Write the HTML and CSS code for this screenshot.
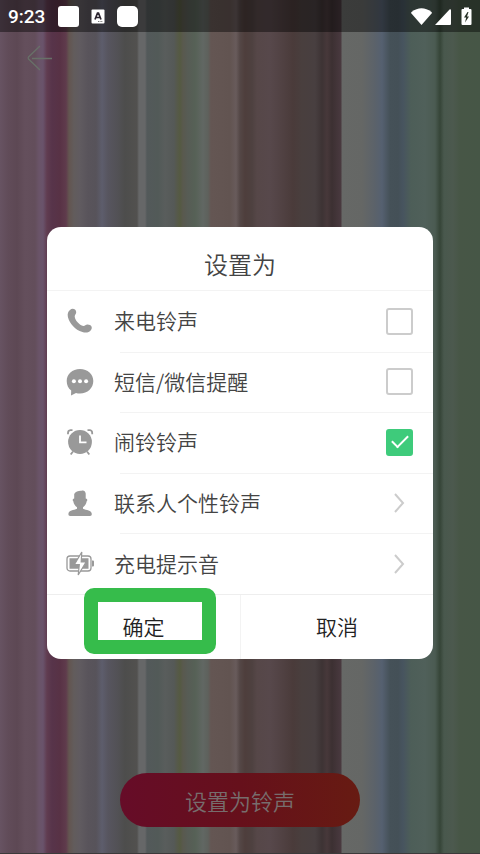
FILE: index.html
```html
<!DOCTYPE html>
<html lang="zh-CN">
<head>
<meta charset="utf-8">
<meta name="viewport" content="width=device-width, initial-scale=1">
<title>设置铃声</title>
<link rel="stylesheet" href="styles.css">
</head>
<body>
<div class="screen">
  <header class="status">
    <span class="clock">9:23</span>
    <span class="notice"></span>
    <svg class="notice-a" width="14" height="15" viewBox="0 0 14 15" aria-hidden="true">
      <rect x="0.5" y="0.5" width="13" height="14" rx="1" fill="#fff"/>
      <path d="M4 10.5 6.500 4h1L10 10.500M5 8.500h4" fill="none" stroke="#2c2530" stroke-width="1.700"/>
      <path d="M7 12.500h5" stroke="#777" stroke-dasharray="1 .6"/>
    </svg>
    <span class="notice round"></span>
    <svg class="signals" width="62" height="20" viewBox="0 0 62 20" fill="#fff" aria-hidden="true">
      <path d="M1.500 6Q11.500-1.500 21.500 6L22 7 11.500 19 1 7z"/>
      <path d="M25 19 39.500 3.500Q41 2.500 41 4.500V18Q41 19 40 19z"/>
      <path fill-rule="evenodd" d="M54 3V1.500h5V3h1.500Q61.500 3 61.500 4v14q0 1-1 1h-8q-1 0-1-1V4q0-1 1-1zM57.500 6 54 11.500h2.200L55 16.500l4-6H57L58.500 6z"/>
    </svg>
  </header>

  <nav class="nav">
    <button class="back" type="button" aria-label="返回">
      <svg width="26" height="26" viewBox="0 0 26 26" fill="none" stroke="#687068" stroke-width="1.300"><path d="M14 1 2.500 12Q1.800 13 2.500 14L14 25M6 13.500h20"/></svg>
    </button>
  </nav>

  <footer class="bottom"><button class="set-button" type="button">设置为铃声</button></footer>

  <div class="overlay">
    <form class="dialog" role="dialog" aria-labelledby="dialog-title">
      <h1 class="title" id="dialog-title">设置为</h1>
      <div class="list">
        <label class="row">
          <svg class="icon" viewBox="0 0 28 28" aria-hidden="true"><path fill="#999" d="M4 3C6 .8 9.800 1.500 10.200 5c.2 2-1.500 2.800-1.500 4.400.3 3.800 4.600 8.600 8.600 9.500 1.600.2 2.300-1.500 4.300-1.400 3.600 0 5.400 3 3.400 5.500-1.900 2.500-5.200 3.300-8.600 2C8.900 22.800 3.600 16.500 1.900 10 1.300 7 2 4.500 4 3z"/></svg>
          <span class="name">来电铃声</span>
          <input class="check" type="checkbox">
        </label>
        <label class="row">
          <svg class="icon" viewBox="0 0 28 28" aria-hidden="true"><path fill="#999" d="M14 1c7.800 0 13.300 5 13.300 12S21.500 25.500 14 25.500c-1.500 0-2.800-.2-4-.6L5 27.500l.2-5C2.300 20.300.7 17 .7 13 .7 6 6.200 1 14 1z"/><g fill="#fff"><circle cx="7.900" cy="13.200" r="2"/><circle cx="14" cy="13.200" r="2"/><circle cx="20.100" cy="13.200" r="2"/></g></svg>
          <span class="name">短信/微信提醒</span>
          <input class="check" type="checkbox">
        </label>
        <label class="row">
          <svg class="icon" viewBox="0 0 28 28" aria-hidden="true"><circle cx="14" cy="14" r="11.900" fill="#999"/><path d="M14 7.500v6.800h6.500" fill="none" stroke="#fff" stroke-width="1.800"/><path d="M2 6.200V5Q2 2.500 4.500 2.200H6.500M21.500 2.200H24Q26.200 2.500 26.200 5V6.200M7 23.500l-2.300 3M21 23.500l2.300 3" fill="none" stroke="#999" stroke-width="1.800"/></svg>
          <span class="name">闹铃铃声</span>
          <input class="check" type="checkbox" checked>
        </label>
        <a class="row" href="#contacts">
          <svg class="icon" viewBox="0 0 28 28" aria-hidden="true"><path fill="#999" d="M8.200 5C9.500 2.200 13 1.500 15.500 1.700c2-.8 3.800.1 4.200 2.800v5c1.800.3 2 1.700 1 2.700-.4 2.900-2.200 5-3.700 6v1.600c3.200 1.500 8.800 1.300 8.800 5.200 0 1.300-.5 2-1.800 2H4.200c-1.300 0-1.800-.7-1.800-2 0-3.900 5.400-3.700 8.600-5.200v-1.600c-1.800-1.200-3.300-3.300-3.700-6-1-.8-.8-2.300.9-2.700z"/></svg>
          <span class="name">联系人个性铃声</span>
          <svg class="chevron" viewBox="0 0 12 20" aria-hidden="true"><path d="M2 1l8 9-8 9"/></svg>
        </a>
        <a class="row" href="#charging">
          <svg class="icon" viewBox="0 0 28 28" aria-hidden="true"><rect x="1" y="6" width="24" height="15" rx="3" fill="none" stroke="#999" stroke-width="1.300"/><path fill="#999" d="M3.500 8.300h19v10.400h-19zM26 10.500h1q1 0 1 1v4q0 1-1 1h-1z"/><path d="M15.800 2 8.300 14.700h5L12.200 25l8-13.100h-5z" fill="#fff" stroke="#999" stroke-width="1.200"/></svg>
          <span class="name">充电提示音</span>
          <svg class="chevron" viewBox="0 0 12 20" aria-hidden="true"><path d="M2 1l8 9-8 9"/></svg>
        </a>
      </div>
      <div class="actions">
        <button class="action confirm" type="button">确定</button>
        <button class="action" type="button">取消</button>
      </div>
    </form>
  </div>
</div>
</body>
</html>
```
FILE: styles.css
```css
*,
*::before,
*::after {
  box-sizing: border-box;
}

body {
  margin: 0;
  font-family: "Noto Sans CJK SC", sans-serif;
  font-weight: 350;
  color: #444;
}

button {
  margin: 0;
  padding: 0;
  border: 0;
  background: none;
  font: inherit;
  color: inherit;
}

.screen {
  position: relative;
  display: flex;
  flex-direction: column;
  min-height: 100vh;
  background: linear-gradient(90deg,
    #675362 0, #614c59 8px, #5d4854 17px, #644f5c 25px, #634e5b 35px,
    #6a5468 39px, #69536b 43px, #603c50 47px, #57344a 52px, #583245 60px, #5f3b4c 66px,
    #635550 69px, #625c5c 74px, #605b60 80px, #59545b 88px, #57535a 96px,
    #5d5d6c 102px, #57555f 108px, #525155 118px, #4d4d4c 125px, #52514f 137px,
    #666768 139px, #666768 145px, #53595a 147px, #525a58 158px, #595d5c 165px, #555957 174px,
    #56594b 177px, #555a42 180px, #59594e 183px, #575c55 188px, #566156 195px, #616763 203px, #5e615c 208px,
    #645653 211px, #625451 230px, #685b5b 236px, #544746 240px,
    #4e3e3c 245px, #4e4140 252px, #564748 257px, #57484b 270px, #504142 283px, #4a3b3a 293px,
    #493f3e 302px, #483f40 315px, #3d3334 322px, #47383a 327px, #3c3032 332px, #49393f 341px,
    #666866 342px, #656765 362px, #5b626a 375px, #556070 382px, #455158 390px, #445057 398px, #47545f 403px,
    #4d5e58 411px, #50605a 425px, #4b5b52 435px, #364538 440px, #49584d 444px, #4c594e 453px, #475646 460px, #465646 100%);
}

.status {
  display: flex;
  align-items: center;
  height: 32px;
  padding: 0 8px;
  background: rgba(0, 0, 0, 0.42);
}

.clock {
  width: 50px;
  font-family: Roboto, sans-serif;
  font-size: 19px;
  font-weight: 500;
  color: #fff;
}

.notice {
  width: 21px;
  height: 21px;
  border-radius: 3px;
  background: #fff;
}

.notice.round {
  border-radius: 5px;
}

.notice-a {
  margin: 0 12px;
}

.signals {
  margin-left: auto;
}

.nav {
  padding: 13px 26px;
}

.back,
.back svg {
  display: block;
}

.bottom {
  display: flex;
  justify-content: center;
  margin-top: auto;
  padding-bottom: 26px;
  border-bottom: 1px solid #3c3a3b;
}

.set-button {
  width: 50%;
  height: 54px;
  border-radius: 27px;
  background: linear-gradient(90deg, #660c28, #66101b 50%, #671b12);
  font-size: 22px;
  color: #776d6d;
}

.overlay {
  position: absolute;
  inset: 32px 0 0;
  display: flex;
  align-items: center;
  padding: 0 47px;
}

.dialog {
  flex: 1;
  border-radius: 14px;
  background: #fff;
}

.title {
  margin: 0;
  padding: 19px 0 9px;
  border-bottom: 1px solid #f3f3f3;
  font-size: 24px;
  font-weight: inherit;
  line-height: 35px;
  text-align: center;
}

.list {
  display: grid;
  grid-auto-rows: 1fr;
  min-height: 303px;
}

.row {
  position: relative;
  display: flex;
  align-items: center;
  padding: 0 20px 0 19px;
  font-size: 21px;
  color: inherit;
  text-decoration: none;
}

.row + .row::before {
  content: "";
  position: absolute;
  top: 0;
  right: 0;
  left: 73px;
  height: 1px;
  background: #f3f3f3;
}

.icon {
  flex: none;
  width: 28px;
  height: 28px;
}

.name {
  flex: 1;
  margin-left: 20px;
  padding-bottom: 2px;
}

.check {
  display: grid;
  place-items: center;
  width: 27px;
  height: 27px;
  margin: 0;
  border: 2px solid #ccc;
  border-radius: 3px;
  appearance: none;
}

.check:checked {
  border-color: #3ecb7b;
  background: #3ecb7b;
}

.check:checked::before {
  content: "";
  width: 16px;
  height: 9px;
  margin-bottom: 6px;
  border: solid #fff;
  border-width: 0 0 2px 2px;
  transform: rotate(-45deg);
}

.chevron {
  width: 12px;
  height: 20px;
  margin-right: 8px;
  fill: none;
  stroke: #ccc;
  stroke-width: 2px;
}

.actions {
  display: grid;
  grid-template-columns: 1fr 1fr;
  border-top: 1px solid #eee;
}

.action {
  position: relative;
  height: 64px;
  padding-bottom: 2px;
  font-size: 21px;
  color: #222;
}

.action + .action {
  border-left: 1px solid #f3f3f3;
}

.confirm {
  z-index: 1;
}

.confirm::after {
  content: "";
  position: absolute;
  top: -7px;
  left: 37px;
  width: 132px;
  height: 66px;
  border: 14px solid #36bc4b;
  border-radius: 10px;
}
```
